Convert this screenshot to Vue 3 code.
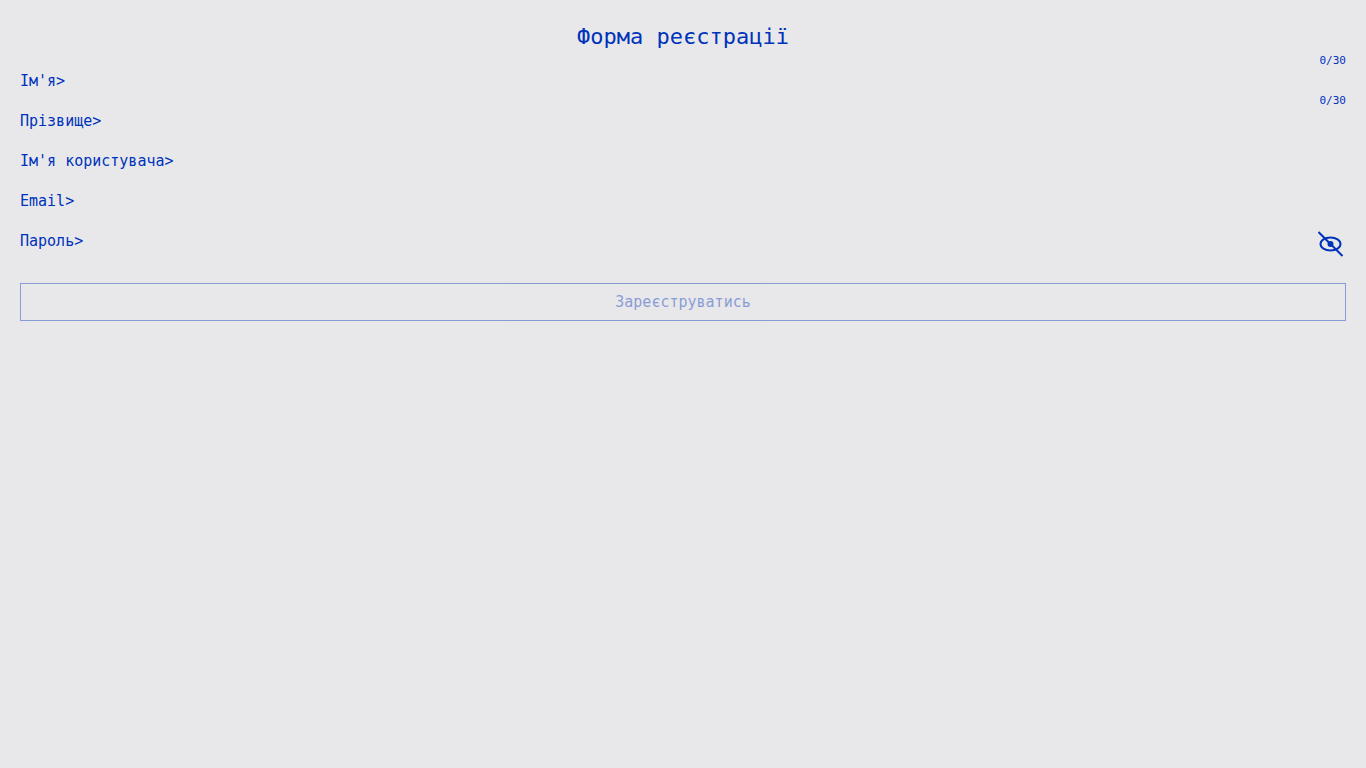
<script setup>
import { reactive, ref } from 'vue'

const fields = [
  { id: 'firstName', label: "Ім'я>", type: 'text', max: 30 },
  { id: 'lastName', label: 'Прізвище>', type: 'text', max: 30 },
  { id: 'username', label: "Ім'я користувача>", type: 'text' },
  { id: 'email', label: 'Email>', type: 'email' },
  { id: 'password', label: 'Пароль>', type: 'password' },
]
const form = reactive({ firstName: '', lastName: '', username: '', email: '', password: '' })
const visible = ref(false)
</script>

<template>
  <main class="page">
    <h1 class="title">Форма реєстрації</h1>
    <form class="form" @submit.prevent>
      <div v-for="f in fields" :key="f.id" class="row">
        <label :for="f.id" class="label">{{ f.label }}</label>
        <input
          :id="f.id"
          v-model="form[f.id]"
          class="input"
          :type="f.type === 'password' && visible ? 'text' : f.type"
          :maxlength="f.max"
        />
        <span v-if="f.max" class="counter">{{ form[f.id].length }}/{{ f.max }}</span>
        <button
          v-if="f.type === 'password'"
          type="button"
          class="eye"
          aria-label="Показати пароль"
          @click="visible = !visible"
        >
          <svg width="26" height="26" viewBox="0 0 26 26" fill="none" stroke="currentColor" stroke-width="2">
            <ellipse cx="12.500" cy="13" rx="10" ry="6.500" />
            <circle cx="12.500" cy="13" r="3" fill="currentColor" stroke="none" />
            <path d="M0.500 1L24.500 25" />
          </svg>
        </button>
      </div>
      <button type="submit" class="submit" disabled>Зареєструватись</button>
    </form>
  </main>
</template>

<style>
body {
  background: #e8e8ea;
}
</style>

<style scoped>
.page {
  padding: 20px;
  color: #0033bb;
  font-family: Consolas, "DejaVu Sans Mono", "Liberation Mono", monospace;
  font-size: 15px;
}
.title {
  margin: 0;
  font-size: 22px;
  font-weight: 400;
  line-height: 34px;
  text-align: center;
}
.form {
  display: flex;
  flex-direction: column;
  padding-top: 7px;
}
.row {
  position: relative;
  display: flex;
  align-items: center;
  height: 40px;
}
.label {
  line-height: 20px;
  white-space: nowrap;
}
.input {
  flex: 1;
  min-width: 0;
  height: 20px;
  padding: 0 32px 0 4px;
  border: 0;
  outline: 0;
  background: transparent;
  color: inherit;
  font: inherit;
}
.counter {
  position: absolute;
  top: -8px;
  right: 0;
  font-size: 11px;
  line-height: 16px;
}
.eye {
  position: absolute;
  top: 10px;
  right: 2px;
  display: flex;
  padding: 0;
  border: 0;
  background: transparent;
  color: inherit;
  cursor: pointer;
}
.submit {
  height: 38px;
  margin-top: 22px;
  padding: 0;
  border: 1px solid currentColor;
  background: transparent;
  color: inherit;
  font: inherit;
  opacity: 0.42;
}
</style>
